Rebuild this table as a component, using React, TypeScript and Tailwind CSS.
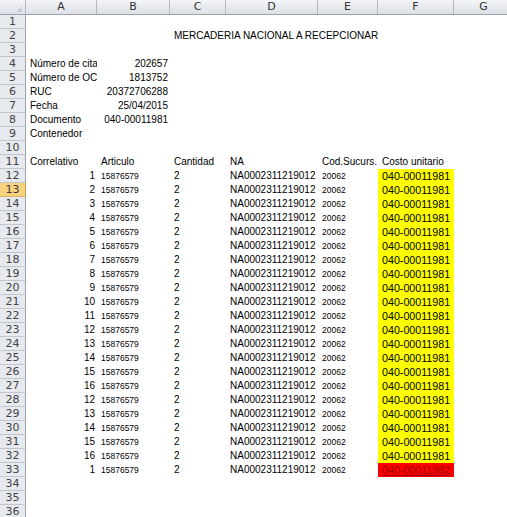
import React from "react";

type Cell = { t?: string; align?: "l" | "r"; small?: boolean; bg?: string; red?: boolean; big?: boolean };

const COLS = [71, 73, 56, 92, 60, 76, 60];
const LETTERS = ["A", "B", "C", "D", "E", "F", "G"];

function buildRows(): Cell[][] {
  const rows: Cell[][] = [];
  for (let i = 0; i < 36; i++) rows.push(COLS.map(() => ({})));
  rows[1][2] = { t: "MERCADERIA NACIONAL A RECEPCIONAR" };
  const meta: [string, string][] = [
    ["Número de cita", "202657"],
    ["Número de OC", "1813752"],
    ["RUC", "20372706288"],
    ["Fecha", "25/04/2015"],
    ["Documento", "040-00011981"],
  ];
  meta.forEach(([a, b], i) => {
    rows[3 + i][0] = { t: a };
    rows[3 + i][1] = { t: b, align: "r" };
  });
  rows[8][0] = { t: "Contenedor" };
  rows[10][0] = { t: "Correlativo" };
  rows[10][1] = { t: "Articulo" };
  rows[10][2] = { t: "Cantidad" };
  rows[10][3] = { t: "NA" };
  rows[10][4] = { t: "Cod.Sucurs." };
  rows[10][5] = { t: "Costo unitario" };
  const corr = [1, 2, 3, 4, 5, 6, 7, 8, 9, 10, 11, 12, 13, 14, 15, 16, 12, 13, 14, 15, 16, 1];
  corr.forEach((c, i) => {
    const r = 11 + i;
    const last = i === corr.length - 1;
    rows[r][0] = { t: String(c), align: "r" };
    rows[r][1] = { t: "15876579", small: true };
    rows[r][2] = { t: "2" };
    rows[r][3] = { t: "NA0002311219012" };
    rows[r][4] = { t: "20062", small: true };
    rows[r][5] = last
      ? { t: "040-00011982", bg: "red", red: true, big: true }
      : { t: "040-00011981", bg: "yellow", big: true };
  });
  return rows;
}

export default function App() {
  const rows = buildRows();
  return (
    <div
      className="w-[507px] h-[517px] overflow-hidden bg-white text-black"
      style={{ fontFamily: '"Liberation Sans", Arial, sans-serif' }}
    >
      {/* column header */}
      <div className="flex h-[15px] border-b border-[#9ea3ab]">
        <div className="w-[26px] shrink-0 border-r border-[#b5b9bf] bg-gradient-to-b from-[#f4f5f7] to-[#dde0e5] flex items-end justify-end">
          <div className="w-0 h-0 border-l-[6px] border-l-transparent border-b-[6px] border-b-[#c9ccd1] mr-[3px] mb-[2px]" />
        </div>
        {COLS.map((w, i) => (
          <div
            key={i}
            className="shrink-0 border-r border-[#b5b9bf] bg-gradient-to-b from-[#f4f5f7] to-[#dde0e5] flex items-center justify-center text-[11px] leading-[14px] text-[#333]"
            style={{ width: w, fontFamily: '"DejaVu Sans", sans-serif' }}
          >
            {LETTERS[i]}
          </div>
        ))}
      </div>
      {rows.map((row, ri) => {
        const selected = ri === 12;
        return (
          <div key={ri} className="flex h-[14px]">
            <div
              className={
                "w-[26px] shrink-0 border-r border-b flex items-center justify-center text-[11px] leading-[13px] " +
                (selected
                  ? "bg-[#f9d27e] border-r-[#c2a15a] border-b-[#d9b262] text-[#3a3a3a]"
                  : "bg-[#e6e9ee] border-r-[#9ea3ab] border-b-[#c3c7cd] text-[#444]")
              }
              style={{ fontFamily: '"DejaVu Sans", sans-serif' }}
            >
              {ri + 1}
            </div>
            {row.map((c, ci) => (
              <div
                key={ci}
                className={
                  "shrink-0 h-[14px] flex items-center whitespace-nowrap " +
                  (ci === 2 && ri === 1 ? "overflow-visible " : "overflow-hidden ") +
                  (c.align === "r" ? "justify-end pl-[4px] pr-[2px] " : "justify-start pl-[3px] pr-[1px] ") +
                  (c.bg === "yellow" ? "bg-[#ffff00] " : c.bg === "red" ? "bg-[#ff0000] " : "") +
                  (c.red ? "text-[#9c0006] underline decoration-[#9c0006] " : "") +
                  (c.small ? "text-[8.5px] " : c.big ? "text-[10.7px] " : "text-[10px] ")
                }
                style={{ width: COLS[ci] }}
              >
                <span className={"leading-[14px] " + (c.align === "r" ? "" : "pl-[1px]")}>{c.t ?? ""}</span>
              </div>
            ))}
          </div>
        );
      })}
    </div>
  );
}
